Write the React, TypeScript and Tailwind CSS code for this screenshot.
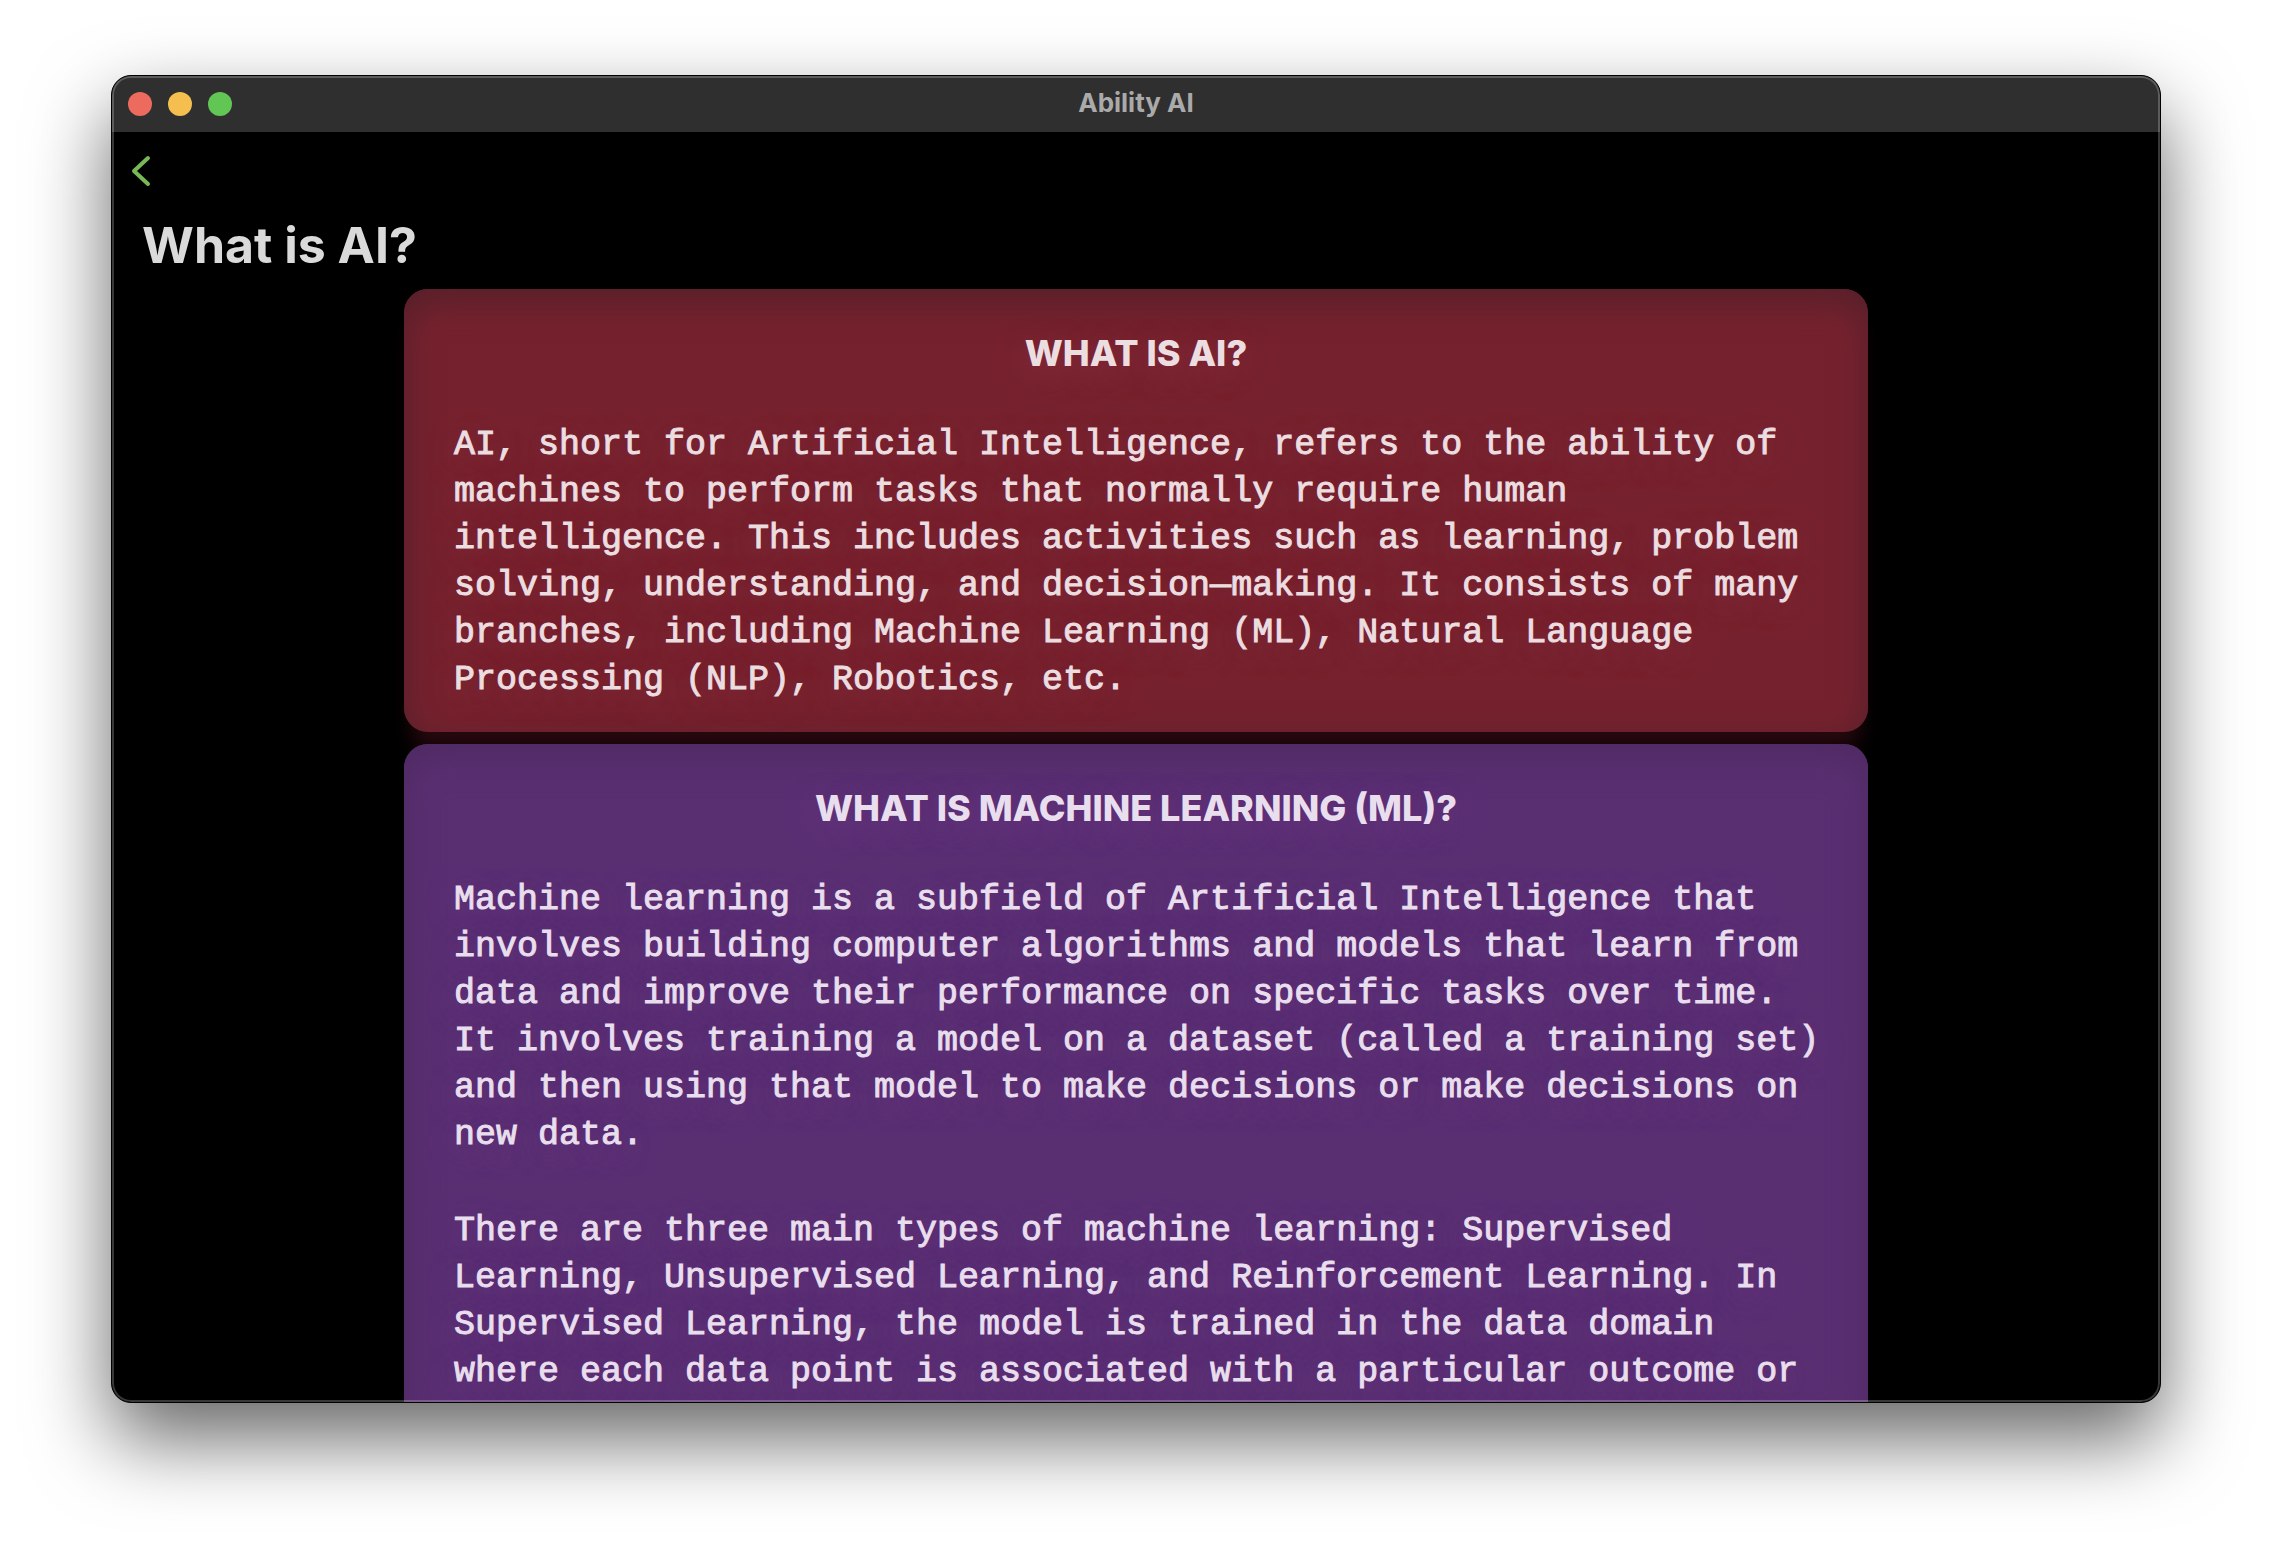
import React from "react";

type CardProps = {
  title: string;
  tone: "red" | "purple";
  paragraphs: string[];
  className?: string;
};

const tones = {
  red: "bg-[#76222e] text-[#ebdde0] shadow-[inset_0_12px_36px_#54202a,0_24px_20px_-8px_#28090f] [text-shadow:0_8px_28px_#882e40]",
  purple:
    "bg-[#5a2f72] text-[#e8deed] shadow-[inset_0_12px_36px_#4e2a62] [text-shadow:0_8px_28px_#683480]",
};

function Card({ title, tone, paragraphs, className = "" }: CardProps) {
  return (
    <article className={`rounded-3xl pt-10 pb-7 ${tones[tone]} ${className}`}>
      <h2 className="text-center font-['Inter',sans-serif] text-[36px] leading-[48px] font-extrabold uppercase">
        {title}
      </h2>
      <div className="mt-[45px] flex flex-col gap-[49px] pr-[46px] pl-[50px] font-['Liberation_Mono',monospace] text-[35px] leading-[47px] [-webkit-text-stroke:1px_currentColor]">
        {paragraphs.map((text) => (
          <p key={text}>{text}</p>
        ))}
      </div>
    </article>
  );
}

export default function App() {
  return (
    <div className="flex h-screen flex-col overflow-hidden bg-white px-[111px] pt-[75px] pb-[147px] font-['Inter',sans-serif]">
      <div className="relative flex min-h-0 flex-1 flex-col overflow-hidden rounded-[20px] border border-black bg-black shadow-[0_36px_80px_rgba(0,0,0,0.6)]">
        <header className="relative flex h-14 shrink-0 items-center justify-center bg-[#2f2f2f]">
          <div className="absolute left-4 flex gap-4">
            <button aria-label="Close" className="size-6 rounded-full bg-[#ed6a5f]" />
            <button aria-label="Minimize" className="size-6 rounded-full bg-[#f5bf4f]" />
            <button aria-label="Zoom" className="size-6 rounded-full bg-[#62c655]" />
          </div>
          <span className="pb-0.5 text-[26px] leading-8 font-bold text-[#aaaaaa]">Ability AI</span>
        </header>
        <main className="flex min-h-0 flex-1 flex-col">
          <nav className="flex shrink-0 px-4 pt-5">
            <button aria-label="Back" className="text-[#78b956]">
              <svg width="24" height="38" viewBox="0 0 24 38" fill="none" stroke="currentColor" strokeWidth="4" strokeLinecap="round" strokeLinejoin="round">
                <path d="M20 6 L6 19 L20 32" />
              </svg>
            </button>
          </nav>
          <h1 className="mt-5 shrink-0 px-[30px] text-[50px] leading-[70px] font-bold text-[#dadada]">
            What is AI?
          </h1>
          <div className="mx-auto flex w-full max-w-[1464px] flex-1 flex-col gap-3 pt-[9px]">
            <Card
              title="What is AI?"
              tone="red"
              paragraphs={[
                "AI, short for Artificial Intelligence, refers to the ability of machines to perform tasks that normally require human intelligence. This includes activities such as learning, problem solving, understanding, and decision—making. It consists of many branches, including Machine Learning (ML), Natural Language Processing (NLP), Robotics, etc.",
              ]}
            />
            <Card
              title="What is Machine Learning (ML)?"
              tone="purple"
              className="relative"
              paragraphs={[
                "Machine learning is a subfield of Artificial Intelligence that involves building computer algorithms and models that learn from data and improve their performance on specific tasks over time. It involves training a model on a dataset (called a training set) and then using that model to make decisions or make decisions on new data.",
                "There are three main types of machine learning: Supervised Learning, Unsupervised Learning, and Reinforcement Learning. In Supervised Learning, the model is trained in the data domain where each data point is associated with a particular outcome or",
              ]}
            />
          </div>
        </main>
        <div className="pointer-events-none absolute inset-0 rounded-[19px] shadow-[inset_0_0_0_2px_rgba(255,255,255,0.22)]" />
      </div>
    </div>
  );
}
